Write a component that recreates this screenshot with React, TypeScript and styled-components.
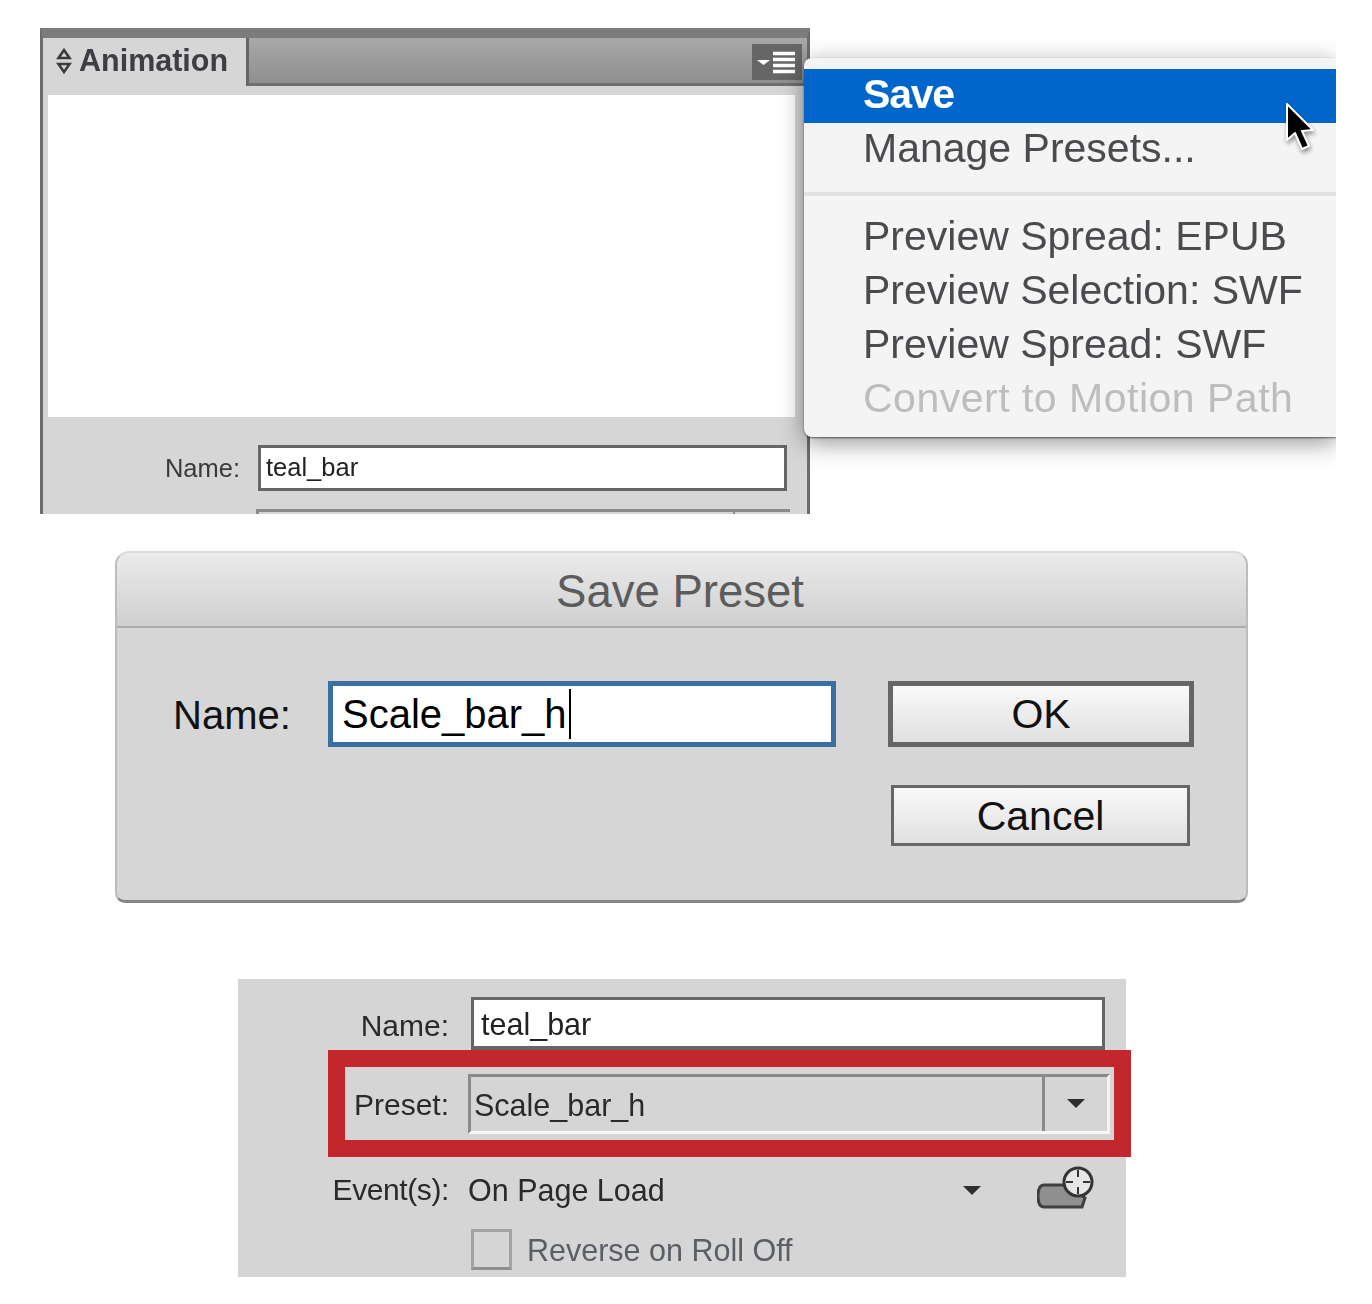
import React from 'react';
import styled, { createGlobalStyle } from 'styled-components';

const GlobalStyle = createGlobalStyle`
  html, body {
    margin: 0;
    padding: 0;
    background: #fff;
    font-family: "Liberation Sans", Arial, sans-serif;
  }
`;

const App = () => {
  return (
    <Page>
      <GlobalStyle />
      <TopFigure>
        <Panel>
          <PanelHeader>
            <Tab>
              <svg width="16" height="28" viewBox="0 0 16 28">
                <path d="M2.500 11 L8 3 L13.500 11 Z M2.500 17 L8 25 L13.500 17 Z" fill="none" stroke="#3c3c3c" strokeWidth="2.600" />
              </svg>
              <TabTitle>Animation</TabTitle>
            </Tab>
            <Strip>
              <MenuButton>
                <svg width="42" height="24" viewBox="0 0 42 24">
                  <path d="M1 10 H14 L7.500 15 Z" fill="#fff" />
                  <path d="M17 3.500 H39 M17 9.500 H39 M17 15.500 H39 M17 21.500 H39" stroke="#fff" strokeWidth="3.600" />
                </svg>
              </MenuButton>
            </Strip>
          </PanelHeader>
          <PanelCanvas />
          <PanelFields>
            <SmallLabel $width={197}>Name:</SmallLabel>
            <SmallInput>teal_bar</SmallInput>
          </PanelFields>
          <CutOffSelect>
            <span />
          </CutOffSelect>
        </Panel>

        <FlyoutMenu>
          <MenuItem $active>Save</MenuItem>
          <MenuItem>Manage Presets...</MenuItem>
          <MenuDivider />
          <MenuItem>Preview Spread: EPUB</MenuItem>
          <MenuItem>Preview Selection: SWF</MenuItem>
          <MenuItem>Preview Spread: SWF</MenuItem>
          <MenuItem $disabled>Convert to Motion Path</MenuItem>
          <Cursor width="30" height="52" viewBox="0 0 30 52">
            <path
              d="M2 2 L2 38 L10 31 L17 47 L24 44 L17 29 L28 28 Z"
              fill="#000"
              stroke="#fff"
              strokeWidth="2"
              strokeLinejoin="round"
            />
          </Cursor>
        </FlyoutMenu>
      </TopFigure>

      <Dialog>
        <DialogTitle>Save Preset</DialogTitle>
        <DialogBody>
          <DialogLabel>Name:</DialogLabel>
          <DialogInput>
            Scale_bar_h
            <Caret />
          </DialogInput>
          <DialogButtons>
            <DialogButton $primary>OK</DialogButton>
            <DialogButton>Cancel</DialogButton>
          </DialogButtons>
        </DialogBody>
      </Dialog>

      <Settings>
        <NameRow>
          <SettingsLabel $width={211}>Name:</SettingsLabel>
          <NameInput>teal_bar</NameInput>
        </NameRow>
        <Highlight>
          <PresetLabel>Preset:</PresetLabel>
          <PresetSelect>
            <PresetValue>Scale_bar_h</PresetValue>
            <PresetArrow>
              <Arrow />
            </PresetArrow>
          </PresetSelect>
        </Highlight>
        <EventRow>
          <SettingsLabel $width={211} $tight>
            Event(s):
          </SettingsLabel>
          <EventValue>
            On Page Load
            <Arrow />
          </EventValue>
          <svg width="58" height="44" viewBox="0 0 58 44">
            <path d="M7 19 H32 L48 32 L45 41 H7 Q1 41 1 30 Q1 19 7 19 Z" fill="#8f8f8f" stroke="#3f3f3f" strokeWidth="3" />
            <circle cx="41" cy="16" r="14" fill="#e6e6e6" stroke="#333" strokeWidth="3" />
            <path d="M41 4 V11 M41 21 V28 M29 16 H36 M46 16 H53" stroke="#333" strokeWidth="2" />
          </svg>
        </EventRow>
        <CheckRow>
          <CheckBox />
          <CheckText>Reverse on Roll Off</CheckText>
        </CheckRow>
      </Settings>
    </Page>
  );
};

export default App;

const Page = styled.div`
  width: 1372px;
  height: 1304px;
  padding-top: 28px;
  box-sizing: border-box;
  overflow: hidden;
  filter: blur(0.7px);
`;

const TopFigure = styled.div`
  position: relative;
  height: 486px;
  padding-left: 40px;
`;

const Panel = styled.div`
  width: 770px;
  height: 486px;
  box-sizing: border-box;
  overflow: hidden;
  background: #d6d6d6;
  border-top: 10px solid #7c7c7c;
  border-left: 3px solid #6c6c6c;
  border-right: 3px solid #6c6c6c;
`;

const PanelHeader = styled.div`
  display: flex;
  align-items: flex-start;
  height: 57px;
`;

const Tab = styled.div`
  display: flex;
  align-items: center;
  gap: 7px;
  width: 203px;
  height: 45px;
  padding-left: 13px;
  box-sizing: border-box;
`;

const TabTitle = styled.span`
  font-size: 30.500px;
  font-weight: bold;
  color: #3d3d46;
`;

const Strip = styled.div`
  flex: 1;
  display: flex;
  justify-content: flex-end;
  align-items: flex-start;
  height: 48px;
  box-sizing: border-box;
  padding: 6px 5px 0 0;
  background: linear-gradient(#a8a8a8, #8f8f8f);
  border-left: 3px solid #666;
  border-bottom: 3px solid #707070;
`;

const MenuButton = styled.div`
  display: flex;
  align-items: center;
  justify-content: center;
  width: 50px;
  height: 36px;
  background: #666;
`;

const PanelCanvas = styled.div`
  height: 322px;
  margin: 0 12px 0 5px;
  background: #fff;
`;

const PanelFields = styled.div`
  display: flex;
  align-items: center;
  gap: 18px;
  margin-top: 28px;
`;

const SmallLabel = styled.div<{ $width: number }>`
  width: ${(p) => p.$width}px;
  text-align: right;
  font-size: 25.500px;
  color: #3a3a3a;
`;

const SmallInput = styled.div`
  width: 529px;
  height: 46px;
  box-sizing: border-box;
  padding-left: 5px;
  line-height: 38px;
  font-size: 25.500px;
  color: #222;
  background: #fff;
  border: 3px solid #666;
`;

const CutOffSelect = styled.div`
  display: flex;
  justify-content: flex-end;
  width: 534px;
  height: 20px;
  margin: 18px 0 0 213px;
  border-top: 3px solid #8a8a8a;
  border-left: 3px solid #8a8a8a;
  box-sizing: border-box;

  span {
    width: 55px;
    border-left: 2px solid #8a8a8a;
  }
`;

const FlyoutMenu = styled.div`
  position: absolute;
  top: 30px;
  left: 804px;
  width: 532px;
  height: 379px;
  padding-top: 11px;
  box-sizing: border-box;
  background: #f4f4f4;
  border-top-left-radius: 8px;
  border-bottom-left-radius: 8px;
  box-shadow: 0 6px 24px rgba(0, 0, 0, 0.42), 0 1px 2px rgba(0, 0, 0, 0.55);
  clip-path: inset(-40px 0 -50px -30px);
`;

const MenuItem = styled.div<{ $active?: boolean; $disabled?: boolean }>`
  height: 54px;
  line-height: 50px;
  padding-left: 59px;
  font-size: 41px;
  font-weight: ${(p) => (p.$active ? 'bold' : 'normal')};
  letter-spacing: ${(p) => (p.$active ? '-1.2px' : p.$disabled ? '0.5px' : '0')};
  color: ${(p) => (p.$active ? '#fff' : p.$disabled ? '#bdbdbd' : '#4a4a4f')};
  background: ${(p) => (p.$active ? '#0066cc' : 'transparent')};
  white-space: nowrap;
`;

const MenuDivider = styled.div`
  height: 4px;
  margin: 15px 0 15px;
  background: #e2e2e2;
`;

const Cursor = styled.svg`
  position: absolute;
  top: 44px;
  left: 481px;
  filter: drop-shadow(1px 3px 2px rgba(0, 0, 0, 0.4));
`;

const Dialog = styled.div`
  width: 1133px;
  height: 352px;
  margin: 37px 0 0 115px;
  box-sizing: border-box;
  overflow: hidden;
  background: #d6d6d6;
  border-radius: 14px 14px 10px 10px;
  border: 2px solid #bcbcbc;
  border-top-color: #dcdcdc;
  border-bottom: 3px solid #858585;
`;

const DialogTitle = styled.div`
  height: 73px;
  line-height: 78px;
  text-align: center;
  font-size: 45.500px;
  color: #5c5c5c;
  padding-right: 3px;
  background: linear-gradient(#ebebeb, #cfcfcf);
  border-bottom: 2px solid #adadad;
`;

const DialogBody = styled.div`
  display: flex;
  align-items: flex-start;
  padding: 53px 0 0 56px;
`;

const DialogLabel = styled.div`
  width: 155px;
  height: 66px;
  line-height: 68px;
  font-size: 40px;
  color: #111;
`;

const DialogInput = styled.div`
  display: flex;
  align-items: center;
  width: 508px;
  height: 66px;
  box-sizing: border-box;
  padding-left: 9px;
  font-size: 40px;
  color: #000;
  background: #fff;
  border: 5px solid #39709f;
`;

const Caret = styled.span`
  width: 2px;
  height: 50px;
  margin-left: 2px;
  background: #000;
`;

const DialogButtons = styled.div`
  display: flex;
  flex-direction: column;
  align-items: flex-start;
  gap: 38px;
  width: 306px;
  margin-left: 52px;
`;

const DialogButton = styled.div<{ $primary?: boolean }>`
  width: ${(p) => (p.$primary ? 306 : 299)}px;
  height: ${(p) => (p.$primary ? 66 : 61)}px;
  margin-left: ${(p) => (p.$primary ? 0 : 3)}px;
  box-sizing: border-box;
  line-height: ${(p) => (p.$primary ? 56 : 57)}px;
  text-align: center;
  font-size: 41px;
  color: #111;
  background: linear-gradient(#f9f9f9, #e0e0e0);
  border: ${(p) => (p.$primary ? 5 : 3)}px solid #666;
`;

const Settings = styled.div`
  width: 888px;
  height: 298px;
  margin: 76px 0 0 238px;
  box-sizing: border-box;
  padding-top: 18px;
  background: #d5d5d5;
`;

const SettingsLabel = styled.div<{ $width: number; $tight?: boolean }>`
  width: ${(p) => p.$width}px;
  text-align: right;
  font-size: 30px;
  letter-spacing: ${(p) => (p.$tight ? '-0.4px' : '0')};
  color: #2a2a2a;
  white-space: nowrap;
`;

const NameRow = styled.div`
  display: flex;
  align-items: center;
  gap: 22px;

  ${SettingsLabel} {
    padding-top: 5px;
  }
`;

const NameInput = styled.div`
  width: 634px;
  height: 53px;
  box-sizing: border-box;
  padding-left: 7px;
  line-height: 48px;
  font-size: 30.500px;
  color: #222;
  background: #fff;
  border: 3px solid #666;
  border-bottom-width: 4px;
`;

const Highlight = styled.div`
  display: flex;
  align-items: center;
  gap: 19px;
  width: 803px;
  height: 107px;
  margin-left: 90px;
  box-sizing: border-box;
  border: 17px solid #c1272d;
  background: #d5d5d5;
`;

const PresetLabel = styled.div`
  width: 104px;
  padding-top: 2px;
  text-align: right;
  font-size: 30px;
  color: #2a2a2a;
`;

const PresetSelect = styled.div`
  display: flex;
  width: 642px;
  height: 60px;
  box-sizing: border-box;
  border-top: 3px solid #8a8a8a;
  border-left: 3px solid #8a8a8a;
  border-right: 3px solid #f4f4f4;
  border-bottom: 3px solid #f8f8f8;
`;

const PresetValue = styled.div`
  flex: 1;
  padding-left: 3px;
  line-height: 56px;
  font-size: 30.500px;
  color: #2a2a2a;
`;

const PresetArrow = styled.div`
  display: flex;
  align-items: center;
  justify-content: center;
  width: 62px;
  border-left: 3px solid #8a8a8a;
`;

const Arrow = styled.span`
  width: 0;
  height: 0;
  border-left: 9px solid transparent;
  border-right: 9px solid transparent;
  border-top: 9px solid #2f2f2f;
`;

const EventRow = styled.div`
  display: flex;
  align-items: center;
  gap: 19px;
  height: 66px;

  svg {
    margin: -4px 0 0 37px;
  }
`;

const EventValue = styled.div`
  display: flex;
  align-items: center;
  justify-content: space-between;
  width: 513px;
  font-size: 30.500px;
  color: #2a2a2a;
  white-space: nowrap;
`;

const CheckRow = styled.div`
  display: flex;
  align-items: center;
  gap: 15px;
  margin: 6px 0 0 233px;
`;

const CheckBox = styled.div`
  width: 41px;
  height: 41px;
  box-sizing: border-box;
  border: 3px solid #a3a3a3;
  border-bottom-color: #8f8f8f;
`;

const CheckText = styled.span`
  padding-top: 2px;
  font-size: 30.500px;
  color: #5a5f66;
`;
